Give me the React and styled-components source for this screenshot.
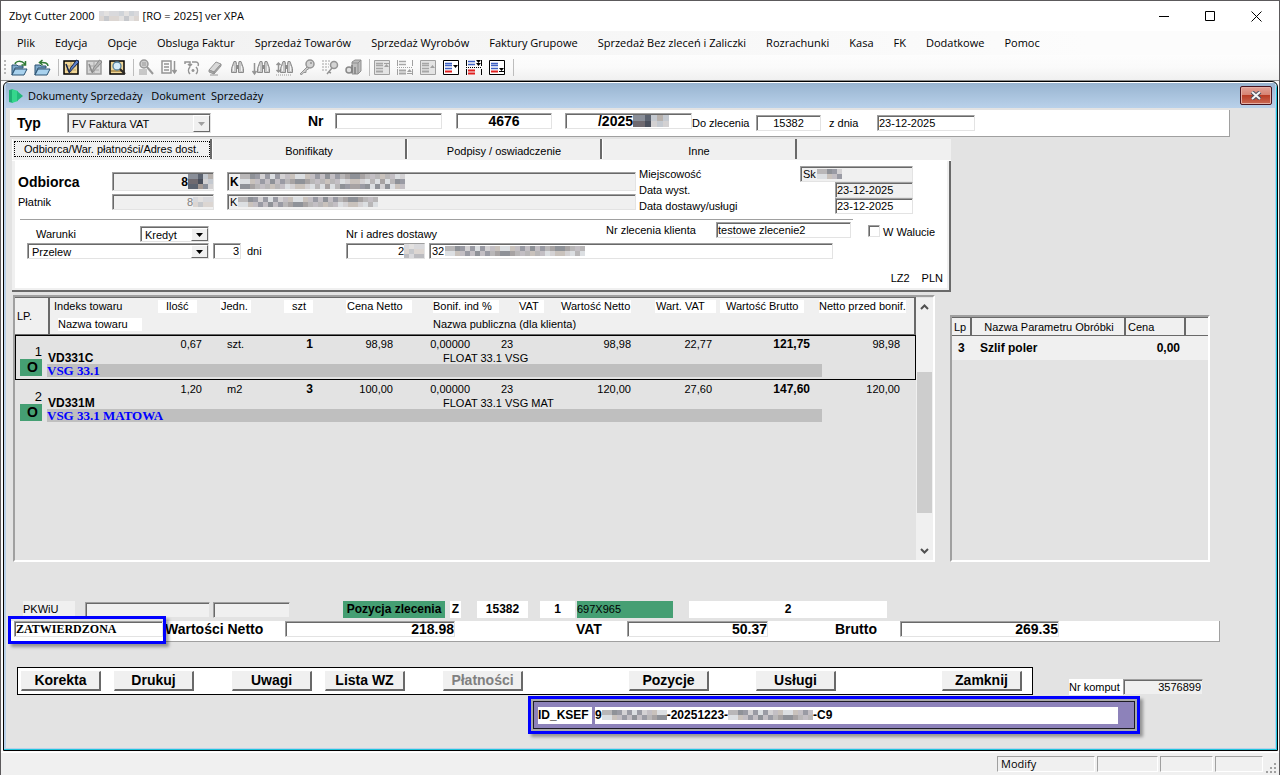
import React from 'react'
import styled, { createGlobalStyle, css } from 'styled-components'

const FACE = '#e3e3e3'
const LIGHT = '#f0f0f0'
const WHITE = '#ffffff'
const SHADOW = '#a0a0a0'
const DARK = '#696969'
const GREEN = '#459f73'
const BLUE = '#0000ff'
const PURPLE = '#8d82ba'

const UI_FONT = '"Open Sans", "Noto Sans", sans-serif'
const FORM_FONT = '"Liberation Sans", Arial, sans-serif'
const SERIF_FONT = '"Liberation Serif", "Times New Roman", serif'

const GlobalStyle = createGlobalStyle`
  * {
    box-sizing: border-box;
  }
  body {
    margin: 0;
    background: #5c5a5c;
    color: #000;
    font: 11px/14px ${FORM_FONT};
  }
  input, select, button {
    margin: 0;
    padding: 0;
    border: 0;
    border-radius: 0;
    background: transparent;
    color: inherit;
    font: inherit;
  }
`

const sunken = css`
  border: 1px solid;
  border-color: ${SHADOW} ${FACE} ${FACE} ${SHADOW};
  box-shadow: inset 1px 1px 0 ${DARK};
`

/* ---------- frame ---------- */

const Frame = styled.div`
  display: flex;
  flex-direction: column;
  min-height: 100vh;
  padding: 1px;
  background: #5c5a5c;
`

const TitleBar = styled.header`
  display: flex;
  align-items: center;
  height: 30px;
  padding-left: 8px;
  background: ${WHITE};
  font: 11px/16px ${UI_FONT};
`

const TitleText = styled.h1`
  display: flex;
  flex: 1;
  align-items: center;
  gap: 4px;
  margin: 0;
  font: inherit;
`

const CaptionButton = styled.button`
  display: flex;
  align-items: center;
  justify-content: center;
  width: 46px;
  height: 30px;
`

const MenuBar = styled.nav`
  display: flex;
  gap: 20px;
  align-items: center;
  height: 24px;
  padding-left: 16px;
  background: linear-gradient(90deg, #f0f0f0, #fcfcfc 85%);
  font: 11px/16px ${UI_FONT};
`

const MenuLink = styled.a`
  color: #000;
  text-decoration: none;
  white-space: nowrap;
`

const ToolBar = styled.div`
  display: flex;
  align-items: center;
  height: 26px;
  padding: 0 0 0 3px;
  border-bottom: 1px solid #8c8c8c;
  background: linear-gradient(#fdfdfd, #fafafa 50%, #f0f0f0);
`

const Grip = styled.div`
  width: 2px;
  height: 16px;
  margin-right: 5px;
  background: repeating-linear-gradient(#b8b8b8 0 2px, transparent 2px 4px);
`

const ToolButton = styled.button`
  display: flex;
  width: 16px;
  height: 17px;
  margin-right: 7px;
`

const Separator = styled.div`
  width: 1px;
  height: 17px;
  margin: 0 4px 0 1px;
  background: #bdbdbd;
`

const Client = styled.main`
  display: flex;
  flex: 1;
  padding: 0 1px 1px 2px;
  background: #fafafa;
`

const ChildWindow = styled.section`
  display: flex;
  flex: 1;
  flex-direction: column;
  border: 1px solid #000;
  border-radius: 6px 6px 0 0;
  box-shadow: inset 0 1px 0 ${WHITE}, inset -1px -1px 0 #1fc4dc;
  background: #b9d1ea;
  padding: 1px 2px 2px 2px;
  overflow: hidden;
`

const ChildTitle = styled.header`
  display: flex;
  align-items: center;
  height: 25px;
  padding: 0 3px 0 2px;
  background: linear-gradient(#98b4d0, #b9d1ea);
  font: 11px/16px ${UI_FONT};
`

const ChildCaption = styled.h2`
  flex: 1;
  margin: 0 0 0 4px;
  font: inherit;
  white-space: pre;
`

const CloseButton = styled.button`
  display: flex;
  align-items: center;
  justify-content: center;
  width: 32px;
  height: 19px;
  border: 1px solid #4a1520;
  border-radius: 2px;
  background: linear-gradient(#e2a297, #d78474 45%, #b93d26 50%, #c96a55);
  box-shadow: inset 0 0 0 1px #e5b0a6;
`

const Content = styled.div`
  display: flex;
  flex: 1;
  flex-direction: column;
  padding-bottom: 14px;
  background: ${FACE};
`

/* ---------- form parts ---------- */

const Label = styled.label`
  flex: none;
  width: ${({ $w }) => ($w ? `${$w}px` : 'auto')};
  margin-left: ${({ $ml = 0 }) => $ml}px;
  line-height: 16px;
  white-space: nowrap;
  align-self: ${({ $align }) => $align || 'auto'};
`

const BigLabel = styled(Label)`
  font-size: 14px;
  font-weight: bold;
`

const Field = styled.input`
  ${sunken}
  flex: none;
  width: ${({ $w }) => $w}px;
  height: 16px;
  margin-left: ${({ $ml = 0 }) => $ml}px;
  padding: 0 1px;
  background: ${({ $grey }) => ($grey ? LIGHT : WHITE)};
  text-align: ${({ $text }) => $text || 'left'};
  align-self: ${({ $align }) => $align || 'auto'};
`

const BigField = styled(Field)`
  padding: 0;
  font-size: 14px;
  font-weight: bold;
`

const StatusField = styled(Field)`
  font: bold 12px/14px ${SERIF_FONT};
`

const MaskedBox = styled.div`
  ${sunken}
  display: flex;
  flex: none;
  align-items: center;
  justify-content: ${({ $end }) => ($end ? 'flex-end' : 'flex-start')};
  width: ${({ $w }) => $w}px;
  height: ${({ $tall }) => ($tall ? 19 : 16)}px;
  margin-left: ${({ $ml = 0 }) => $ml}px;
  padding: 0 0 0 2px;
  background: ${({ $grey }) => ($grey ? LIGHT : WHITE)};
  overflow: hidden;
`

const BareInput = styled.input`
  width: ${({ $w }) => $w}px;
  height: 14px;
  text-align: ${({ $text }) => $text || 'left'};
  font-size: ${({ $size = 11 }) => $size}px;
  font-weight: ${({ $bold }) => ($bold ? 'bold' : 'normal')};
  color: ${({ $dim }) => ($dim ? '#808080' : '#000')};
`

const SelectBox = styled.div`
  ${sunken}
  display: flex;
  flex: none;
  width: ${({ $w }) => $w}px;
  height: ${({ $tall }) => ($tall ? 20 : 16)}px;
  margin-left: ${({ $ml = 0 }) => $ml}px;
  padding: 1px 0 0 1px;
  background: ${({ $grey }) => ($grey ? LIGHT : WHITE)};
  align-self: ${({ $align }) => $align || 'auto'};
`

const Select = styled.select`
  flex: 1;
  min-width: 0;
  padding-left: 3px;
  appearance: none;
  line-height: 12px;
  opacity: 1;
  color: #000;
`

const Arrow = styled.span`
  display: flex;
  align-items: center;
  justify-content: center;
  width: 17px;
  border: 1px solid;
  border-color: ${WHITE} ${DARK} ${DARK} ${WHITE};
  background: ${LIGHT};
  pointer-events: none;
`

const CheckBox = styled.input`
  ${sunken}
  width: 12px;
  height: 12px;
  margin: 3px 0 0 17px;
  appearance: none;
  background: ${WHITE};
`

const MosaicSvg = styled.svg`
  display: block;
  flex: none;
`

/* ---------- header and tabs ---------- */

const HeaderPanel = styled.div`
  display: flex;
  align-items: center;
  height: 27px;
  margin: 2px 45px 0 4px;
  padding: 0 0 0 7px;
  border: solid ${SHADOW};
  border-width: 0 1px 1px 0;
  background: ${WHITE};
`

const NumberGroup = styled.div`
  display: flex;
  align-items: center;
  align-self: flex-start;
  padding-top: 3px;
  margin-left: 97px;
`

const TabSet = styled.div`
  margin: 2px 324px 0 6px;
`

const TabList = styled.div`
  display: flex;
  height: 22px;
  background: ${LIGHT};
  border-bottom: 1px solid ${WHITE};
`

const Tab = styled.button`
  width: 195px;
  height: 20px;
  border-right: 2px solid ${DARK};
  border-left: 1px solid ${WHITE};
  padding-top: 3px;
  ${({ $active }) =>
    $active &&
    css`
      width: 200px;
      padding-top: 0;
      outline: 1px dotted #000;
      outline-offset: -3px;
    `}
`

const TabPanel = styled.div`
  padding: 5px 5px 3px 3px;
  border: solid ${DARK};
  border-width: 0 2px 2px 0;
  box-shadow: inset 3px 0 0 ${LIGHT}, inset -2px -2px 0 ${LIGHT};
  background: ${WHITE};
`

const Party = styled.div`
  display: flex;
  justify-content: space-between;
  height: 53px;
  margin-right: 31px;
  padding-left: 3px;
`

const PartyRows = styled.div`
  display: flex;
  flex-direction: column;
  gap: 3px;
  padding-top: 6px;
`

const Line = styled.div`
  display: flex;
  align-items: center;
`

const DateRow = styled.div`
  display: flex;
  justify-content: space-between;
  width: 274px;
  height: 16px;
`

const Rule = styled.hr`
  height: 1px;
  margin: 0 91px 2px 5px;
  border: 0;
  background: ${SHADOW};
`

const TermsRow = styled.div`
  display: flex;
  height: 20px;
  padding-left: 21px;
  margin-bottom: 1px;
`

const TermsLine = styled(Line)`
  padding-left: 12px;
`

const TabFooter = styled.div`
  display: flex;
  justify-content: flex-end;
  gap: 12px;
  margin: 12px 1px 2px;
  line-height: 14px;
`

/* ---------- tables ---------- */

const Tables = styled.div`
  display: flex;
  flex: 1;
  align-items: stretch;
  gap: 15px;
  min-height: 267px;
  margin: 3px 65px 0 7px;
`

const Sheet = styled.div`
  display: flex;
  flex: 1;
  min-width: 0;
  border: 2px solid;
  border-color: ${SHADOW} ${WHITE} ${WHITE} ${SHADOW};
`

const ItemsTable = styled.table`
  display: block;
  flex: 1;
  min-width: 0;
  border-collapse: collapse;
`

const ItemsHead = styled.thead`
  display: block;
`

const ItemsBody = styled.tbody`
  display: block;
`

const HeadRow = styled.tr`
  display: grid;
  grid-template-columns: 35px 108px 62px 64px 62px 87px 86px 42px 94px 65px 99px 1fr;
  grid-template-rows: 18px 18px;
  border: solid ${DARK};
  border-width: 1px 2px 1px 0;
  background: ${LIGHT};
`

const HeadCell = styled.th`
  padding: 2px 0 0;
  font-weight: normal;
  text-align: left;
  white-space: nowrap;
  grid-row: ${({ $row = 1 }) => $row};
  grid-column: ${({ $col }) => $col};
`

const LpHead = styled(HeadCell)`
  grid-row: 1 / 3;
  padding: 11px 0 0 2px;
  border-right: 2px solid ${DARK};
`

const HeadLabel = styled.span`
  display: block;
  width: ${({ $w }) => ($w ? `${$w}px` : 'auto')};
  height: 13px;
  margin-left: ${({ $ml = 0 }) => $ml}px;
  padding-left: ${({ $pad = 0 }) => $pad}px;
  line-height: 13px;
  background: ${({ $plain }) => ($plain ? 'transparent' : WHITE)};
`

const ItemRow = styled.tr`
  display: grid;
  grid-template-columns: 31px 111px 44px 68px 43px 80px 77px 50px 111px 81px 98px 90px 1fr;
  grid-template-rows: 15px 13px 13px 2px;
  border: 1px solid ${({ $selected }) => ($selected ? '#000' : 'transparent')};
`

const Cell = styled.td`
  padding: 0 0 0 ${({ $pad = 0 }) => $pad}px;
  text-align: ${({ $left }) => ($left ? 'left' : 'right')};
  line-height: 16px;
  white-space: nowrap;
  font-size: ${({ $bold }) => ($bold ? 12 : 11)}px;
  font-weight: ${({ $bold }) => ($bold ? 'bold' : 'normal')};
`

const LpCell = styled.td`
  display: flex;
  flex-direction: column;
  align-items: flex-end;
  justify-content: flex-end;
  grid-row: 1 / 4;
  padding: 0 5px 1px 0;
  font-size: 13px;
`

const Badge = styled.b`
  width: 22px;
  height: 17px;
  padding-right: 4px;
  background: ${GREEN};
  font-size: 14px;
  line-height: 17px;
  text-align: right;
`

const IndexCell = styled.td`
  grid-row: 2;
  grid-column: 2 / 7;
  padding: 0 0 0 1px;
  font-size: 12px;
  font-weight: bold;
`

const PublicCell = styled.td`
  grid-row: 2;
  grid-column: 7 / 13;
  padding: 0 0 0 50px;
`

const NameCell = styled.td`
  grid-row: 3;
  grid-column: 2 / 12;
  margin-right: -12px;
  padding: 0;
  background: #bfbfbf;
  color: ${BLUE};
  font: bold 13px/13px ${SERIF_FONT};
`

const ScrollBar = styled.div`
  display: flex;
  flex-direction: column;
  align-items: center;
  width: 17px;
  padding-top: 1px;
  background: ${LIGHT};
  background-clip: content-box;
`

const ScrollButton = styled.button`
  display: flex;
  align-items: center;
  justify-content: center;
  width: 16px;
  height: 18px;
`

const ScrollTrack = styled.div`
  flex: 1;
  width: 100%;
  padding: 56px 1px 29px 1px;
`

const ScrollThumb = styled.div`
  height: 100%;
  background: #cdcdcd;
`

const ParamSheet = styled(Sheet)`
  flex: 0 0 260px;
  margin-top: 20px;
`

const ParamTable = styled.table`
  width: 100%;
  height: 42px;
  border-collapse: collapse;
  table-layout: fixed;

  th {
    height: 18px;
    padding: 1px 0 0 2px;
    border: solid ${DARK};
    border-width: 1px 2px 1px 0;
    background: ${LIGHT};
    font-weight: normal;
    text-align: left;
  }
  th:last-child {
    border-right: 0;
  }
  th:nth-child(2) {
    text-align: center;
  }
  td {
    height: 24px;
    padding: 0 5px 0 9px;
    background: ${LIGHT};
    font-size: 12px;
    font-weight: bold;
  }
  td:first-child {
    padding: 0 0 0 6px;
  }
  td:nth-child(3) {
    text-align: right;
  }
`

/* ---------- bottom ---------- */

const OrderRow = styled.div`
  display: flex;
  align-items: center;
  height: 17px;
  margin: 39px 0 0 17px;
`

const Chip = styled.output`
  width: ${({ $w }) => $w}px;
  height: 17px;
  margin-left: ${({ $ml = 0 }) => $ml}px;
  background: ${({ $bg }) => $bg || WHITE};
  font-size: ${({ $regular }) => ($regular ? 11 : 12)}px;
  font-weight: ${({ $regular }) => ($regular ? 'normal' : 'bold')};
  line-height: 17px;
  text-align: ${({ $text }) => $text || 'center'};
`

const Totals = styled.div`
  display: flex;
  height: 21px;
  margin: 3px 55px 0 4px;
  padding-left: 4px;
  border: solid ${SHADOW};
  border-width: 0 1px 1px 0;
  background: ${WHITE};
`

const Marked = styled.div`
  position: relative;
  display: flex;
  align-self: flex-start;

  &::after {
    content: '';
    position: absolute;
    inset: -5px -3px -7px -6px;
    border: 3px solid ${BLUE};
    box-shadow: 3px 3px 3px rgba(0, 0, 0, 0.35);
    pointer-events: none;
  }
`

const ActionRow = styled.div`
  display: flex;
  align-items: flex-end;
  margin: 25px 0 0 11px;
`

const Actions = styled.div`
  display: flex;
  width: 1016px;
  height: 28px;
  padding: 3px 0 0 3px;
  border: 1px solid #000;
  background: ${WHITE};
`

const ActionButton = styled.button`
  flex: none;
  width: 80px;
  height: 20px;
  margin-left: ${({ $ml = 0 }) => $ml}px;
  border: solid;
  border-width: 1px 2px 2px 1px;
  border-color: ${LIGHT} ${DARK} ${DARK} ${LIGHT};
  background: ${LIGHT};
  font-size: 14px;
  font-weight: bold;
  line-height: 17px;

  &:disabled {
    color: #808080;
  }
`

const NumberLabel = styled(Label)`
  margin-left: 36px;
  height: 16px;
  background: ${WHITE};
`

const Ksef = styled.div`
  display: flex;
  align-items: center;
  width: 612px;
  height: 38px;
  margin: 1px 0 0 522px;
  padding: 0 0 0 3px;
  border: 3px solid ${BLUE};
  background: ${PURPLE};
  box-shadow: 3px 3px 3px rgba(0, 0, 0, 0.35), inset 0 0 0 2px #a8a8a8,
    inset 0 0 0 3px #1c1a24;
  font-size: 12px;
  font-weight: bold;
`

const KsefLabel = styled.label`
  width: 54px;
  height: 17px;
  margin-left: 4px;
  background: ${WHITE};
  line-height: 17px;
`

const KsefValue = styled.output`
  display: flex;
  align-items: center;
  width: 523px;
  height: 17px;
  margin-left: 3px;
  background: ${WHITE};
`

const StatusBar = styled.footer`
  display: flex;
  align-items: flex-start;
  justify-content: flex-end;
  gap: 2px;
  height: 23px;
  padding: 3px 2px 0 0;
  border-top: 1px solid ${WHITE};
  background: ${LIGHT};
  font: 11px/16px ${UI_FONT};
`

const StatusCell = styled.div`
  width: ${({ $w }) => $w}px;
  height: 16px;
  padding-left: 3px;
  border: 1px solid;
  border-color: ${SHADOW} ${WHITE} ${WHITE} ${SHADOW};
  line-height: 14px;
`

/* ---------- drawings ---------- */

const PALETTES = {
  grey: ['#b9b7b8', '#d4d2d4', '#8f9298', '#c3bfc4', '#a7a3a3', '#dcdfe2', '#9a9ba4', '#c9c2bc'],
  dark: ['#8a8f99', '#b7b1ad', '#5c6370', '#d3d1d2', '#a59a94', '#6f6a70', '#c4c9d0', '#494f5c'],
  pale: ['#d9d9dc', '#c6c8cc', '#e3e1e0', '#cfd3d8', '#bcbcc0', '#dcd6d2']
}

const Mosaic = ({ cols, rows = 2, size = 5, tone = 'grey' }) => {
  const palette = PALETTES[tone]
  const tiles = []
  for (let y = 0; y < rows; y++) {
    for (let x = 0; x < cols; x++) {
      const fill = palette[(x * 7 + y * 5 + ((x * x) % 11)) % palette.length]
      tiles.push(
        <rect key={`${x}-${y}`} x={x * size} y={y * size} width={size} height={size} fill={fill} />
      )
    }
  }
  return (
    <MosaicSvg width={cols * size} height={rows * size} aria-hidden="true" shapeRendering="crispEdges">
      {tiles}
    </MosaicSvg>
  )
}

const Triangle = ({ dim }) => (
  <svg width="7" height="4" viewBox="0 0 7 4" aria-hidden="true">
    <path d="M0 0h7L3.5 4z" fill={dim ? '#a0a0a0' : '#000'} />
  </svg>
)

const Chevron = ({ down }) => (
  <svg width="9" height="6" viewBox="0 0 9 6" aria-hidden="true">
    <path
      d={down ? 'M1 1l3.5 3.5L8 1' : 'M1 5l3.5-3.5L8 5'}
      fill="none"
      stroke="#505050"
      strokeWidth="2"
    />
  </svg>
)

const Folder = ({ back }) => (
  <>
    <path d="M1 6h5l1 1h5v2H4l-3 7z" fill="#7fa9cb" stroke="#2b5373" />
    <path d="M4 10h12l-3 6H1z" fill="#a9d2ee" stroke="#2b5373" />
    {back ? (
      <path d="M14 7C14 4 11 3 6 3.500M8.500 1L5.500 3.500l3 2.500" fill="none" stroke="#2f7a34" strokeWidth="1.500" />
    ) : (
      <path d="M4 5C5 2 10 1 14 5M14.500 2v4h-4" fill="none" stroke="#2f7a34" strokeWidth="1.500" />
    )}
  </>
)

const Record = ({ dim }) => (
  <>
    <path d="M1 2h14v13H1z" fill={dim ? '#d6d6d6' : '#f0d696'} stroke={dim ? '#9c9c9c' : '#000'} strokeWidth="1.500" />
    <path d="M3 7h10M3 11h10M8 3v11" stroke={dim ? '#a8a8a8' : '#c0a468'} />
    <path d="M13.500 1L7.500 9l-1.500 5 3-3.500L16 3z" fill={dim ? '#b4b4b4' : '#5b7fc9'} stroke={dim ? '#8a8a8a' : '#14244f'} />
    <path d="M3 5l3 8" stroke={dim ? '#8a8a8a' : '#14244f'} strokeWidth="1.500" />
  </>
)

/* two barrels joined by a short bridge */
const Binoculars = ({ shift = 0 }) => (
  <g transform={`translate(${shift} 0)`} stroke="#8b8b8b" fill="#c8c8c8">
    <path d="M4 2.500h2l.5 3V13.500h-5V9.500zM9 2.500h2l2.500 7v4h-5v-8z" />
    <path d="M6.500 6.500h2v3h-2z" fill="#8b8b8b" />
    <path d="M3.500 7v5M11.500 7v5" stroke="#f2f2f2" />
  </g>
)

const Lines = ({ hot, spot }) => {
  const ink = hot ? '#000' : '#a0a0a0'
  const row = hot ? '#3f62c4' : '#a6a6a6'
  const mark = hot ? '#e02020' : '#a6a6a6'
  const split = spot === 'split'
  return (
    <>
      <path
        d={split ? 'M.5 1v6M15.500 1v6M.5 10v6M15.500 10v6' : 'M.5 1.500h15v14H.5z'}
        fill={hot ? '#fff' : '#e4e4e4'}
        stroke={ink}
      />
      <path d={split ? 'M2 2.500h7M2 5.500h7' : 'M2 4.500h7M2 6.500h7M2 9.500h7'} stroke={row} strokeWidth="1.500" />
      <path d={split ? 'M2 11.500h7M2 14.500h7' : 'M2 12.500h7'} stroke={mark} strokeWidth="2" />
      {spot === 'up' && <path d="M10 4h5v1h-5zM12.500 5l2.500 3h-5z" fill={ink} />}
      {spot === 'mid' && <path d="M12.500 6l2.500 3h-5z" fill={ink} />}
      {spot === 'down' && <path d="M10 6h5l-2.500 3z" fill={ink} />}
      {spot === 'last' && <path d="M10 9h5l-2.500 3zM10 12h5v1h-5z" fill={ink} />}
      {split && (
        <>
          <path d="M0 8.500h16" stroke={ink} strokeDasharray="1 1" />
          <path d={hot ? 'M10 1h5l-2.500 3zM10 4h5l-2.500 3z' : 'M12.500 10l2.500 3h-5zM10 14h5v1h-5z'} fill={ink} />
        </>
      )}
    </>
  )
}

const GREY_LINE = { fill: 'none', stroke: '#949494', strokeWidth: 1.5 }

const TOOL_GROUPS = [
  [
    ['Otwórz', <Folder />],
    ['Powrót', <Folder back />]
  ],
  [
    ['Modyfikuj', <Record />],
    ['Dopisz', <Record dim />],
    [
      'Pokaż',
      <>
        <path d="M1 2h14v13H1z" fill="#f0d696" stroke="#000" strokeWidth="1.500" />
        <path d="M2 12h12" stroke="#b89a5a" strokeWidth="2" />
        <circle cx="8" cy="7" r="4" fill="#d5ecfa" stroke="#56809c" strokeWidth="1.300" />
        <path d="M11 10l5 5" stroke="#2d2a26" strokeWidth="2.200" />
      </>
    ]
  ],
  [
    [
      'Zakres',
      <>
        <circle cx="6" cy="5" r="4" fill="#cfcfcf" stroke="#999" strokeWidth="1.500" />
        <path d="M4 4h4M4 6h4M1 11h8M1 13h8M1 15h8" stroke="#999" />
        <path d="M9 8l6 7" stroke="#999" strokeWidth="2" />
      </>
    ],
    ['Sortuj', <path d="M1 2h9v12H1zM3 5h5M3 8h5M3 11h5M13.500 2v12M11.500 11l2 3 2-3" {...GREY_LINE} />],
    ['Wyrażenie', <path d="M1 5V3h5v3M4 5l2 2 2-2M6 8c-2 2-2 5 0 7M9 10v3M7.500 11.500h3M12 8c2 2 2 5 0 7M8 3h4c2 0 3 2 2 4" {...GREY_LINE} />],
    [
      'Wyczyść',
      <>
        <path d="M2 11l7-8 5 2-7 8z" fill="#d8d8d8" stroke="#969696" />
        <path d="M2 11l5 2v2l-5-2zM7 13l7-8v2l-7 8zM3 16h8" fill="#a8a8a8" stroke="#969696" />
      </>
    ],
    ['Szukaj', <Binoculars />],
    [
      'Szukaj dalej',
      <>
        <path d="M1.500 4v11M-.5 12l2 3 2-3" {...GREY_LINE} />
        <Binoculars shift={3} />
      </>
    ],
    [
      'Szukaj w zakresie',
      <>
        <path d="M2.500 4v8M.5 6l2-2 2 2M.5 11l2 2 2-2" {...GREY_LINE} />
        <Binoculars shift={3} />
        <path d="M0 16h16" stroke="#999" strokeDasharray="1 1" />
      </>
    ],
    [
      'Klucz',
      <>
        <path d="M8 8l-7 7 2 .5 1.500-2H7l0-2 3-2" fill="#d0d0d0" stroke="#949494" />
        <circle cx="11" cy="5" r="4" fill="#d4d4d4" stroke="#949494" strokeWidth="1.500" />
        <circle cx="12" cy="4" r="1" fill="#949494" />
      </>
    ],
    [
      'Lista kluczy',
      <>
        <path d="M0 2h9M0 5h7M0 8h7M0 11h5" stroke="#a2a2a2" strokeDasharray="2 1" />
        <path d="M10 9l-5 6M7 13l2 1" {...GREY_LINE} />
        <circle cx="12" cy="6" r="3.500" fill="#d4d4d4" stroke="#949494" strokeWidth="1.500" />
      </>
    ],
    [
      'Baza',
      <>
        <path d="M7 3l3-2h6v11l-3 3H7z" fill="#bdbdbd" stroke="#8f8f8f" />
        <path d="M13 4v11M7 4h6l3-3" stroke="#8f8f8f" fill="none" />
        <circle cx="4" cy="11" r="3" fill="#e0e0e0" stroke="#8a8a8a" strokeWidth="1.500" />
        <path d="M7 6v8M10 8v7" stroke="#808080" strokeWidth="1.500" />
      </>
    ]
  ],
  [
    ['Pierwszy', <Lines spot="up" />],
    ['Strona w górę', <Lines spot="split" />],
    ['Poprzedni', <Lines spot="mid" />],
    ['Następny', <Lines hot spot="down" />],
    ['Strona w dół', <Lines hot spot="split" />],
    ['Ostatni', <Lines hot spot="last" />]
  ]
]

/* ---------- data ---------- */

const MENU = [
  'Plik',
  'Edycja',
  'Opcje',
  'Obsluga Faktur',
  'Sprzedaż Towarów',
  'Sprzedaż Wyrobów',
  'Faktury Grupowe',
  'Sprzedaż Bez zleceń i Zaliczki',
  'Rozrachunki',
  'Kasa',
  'FK',
  'Dodatkowe',
  'Pomoc'
]

const TABS = ['Odbiorca/War. płatności/Adres dost.', 'Bonifikaty', 'Podpisy / oswiadczenie', 'Inne']

const HEADINGS = [
  { text: 'Indeks towaru', ml: 4, plain: true },
  { text: 'Ilość', w: 39, pad: 8 },
  { text: 'Jedn.', w: 31, pad: 1 },
  { text: 'szt', w: 29, pad: 8 },
  { text: 'Cena Netto', w: 66, pad: 1 },
  { text: 'Bonif. ind %', w: 66 },
  { text: 'VAT', w: 25 },
  { text: 'Wartość Netto', w: 70 },
  { text: 'Wart. VAT', w: 61, pad: 1 },
  { text: 'Wartość Brutto', w: 84, pad: 6 },
  { text: 'Netto przed bonif.', w: 87 }
]

const ITEMS = [
  {
    lp: 1,
    index: 'VD331C',
    name: 'VSG 33.1',
    publicName: 'FLOAT 33.1 VSG',
    qty: '0,67',
    unit: 'szt.',
    pcs: '1',
    price: '98,98',
    net: '98,98',
    tax: '22,77',
    gross: '121,75',
    before: '98,98'
  },
  {
    lp: 2,
    index: 'VD331M',
    name: 'VSG 33.1 MATOWA',
    publicName: 'FLOAT 33.1 VSG MAT',
    qty: '1,20',
    unit: 'm2',
    pcs: '3',
    price: '100,00',
    net: '120,00',
    tax: '27,60',
    gross: '147,60',
    before: '120,00'
  }
]

const ACTIONS = [
  { text: 'Korekta' },
  { text: 'Drukuj', ml: 13 },
  { text: 'Uwagi', ml: 38 },
  { text: 'Lista WZ', ml: 13 },
  { text: 'Płatności', ml: 38, disabled: true },
  { text: 'Pozycje', ml: 106 },
  { text: 'Usługi', ml: 47 },
  { text: 'Zamknij', ml: 106 }
]

/* ---------- sections ---------- */

const DropDown = ({ id, value, label, disabled, ...box }) => (
  <SelectBox {...box}>
    <Select id={id} aria-label={label} disabled={disabled} defaultValue={value}>
      <option>{value}</option>
    </Select>
    <Arrow>
      <Triangle dim={disabled} />
    </Arrow>
  </SelectBox>
)

const Caption = () => (
  <TitleBar>
    <TitleText>
      <span>Zbyt Cutter 2000</span>
      <Mosaic cols={8} rows={2} tone="pale" />
      <span>[RO = 2025] ver XPA</span>
    </TitleText>
    <CaptionButton aria-label="Minimalizuj">
      <svg width="10" height="10">
        <path d="M0 5.500h10" stroke="#000" />
      </svg>
    </CaptionButton>
    <CaptionButton aria-label="Maksymalizuj">
      <svg width="10" height="10">
        <path d="M.5.5h9v9h-9z" fill="none" stroke="#000" />
      </svg>
    </CaptionButton>
    <CaptionButton aria-label="Zamknij program">
      <svg width="11" height="11">
        <path d="M.5.5l10 10M10.500.5l-10 10" stroke="#000" />
      </svg>
    </CaptionButton>
  </TitleBar>
)

const Tools = () => (
  <ToolBar role="toolbar">
    <Grip />
    {TOOL_GROUPS.map((group, i) => (
      <React.Fragment key={i}>
        {group.map(([title, drawing]) => (
          <ToolButton key={title} aria-label={title}>
            <svg width="16" height="17" viewBox="0 0 16 17" overflow="visible">
              {drawing}
            </svg>
          </ToolButton>
        ))}
        <Separator />
      </React.Fragment>
    ))}
  </ToolBar>
)

const DocumentHeader = () => (
  <HeaderPanel>
    <BigLabel htmlFor="typ" $w={50}>
      Typ
    </BigLabel>
    <DropDown id="typ" value="FV Faktura VAT" $w={144} $tall $grey disabled />
    <NumberGroup>
      <BigLabel htmlFor="nr" $w={27}>
        Nr
      </BigLabel>
      <Field id="nr" $w={107} />
      <BigField aria-label="Numer" $w={96} $ml={14} $text="center" defaultValue="4676" />
      <MaskedBox $w={127} $ml={13}>
        <BareInput aria-label="Rok" $w={65} $text="right" $size={14} $bold defaultValue="/2025" />
        <Mosaic cols={6} rows={2} tone="dark" size={6} />
      </MaskedBox>
    </NumberGroup>
    <Label htmlFor="zlec" $w={64}>
      Do zlecenia
    </Label>
    <Field id="zlec" $w={65} $text="center" defaultValue="15382" />
    <Label htmlFor="zdnia" $w={48} $ml={8}>
      z dnia
    </Label>
    <Field id="zdnia" $w={98} defaultValue="23-12-2025" />
  </HeaderPanel>
)

const Recipient = () => (
  <Party>
    <PartyRows>
      <Line>
        <BigLabel htmlFor="odb" $w={94}>
          Odbiorca
        </BigLabel>
        <MaskedBox $w={102} $tall $grey $end>
          <BareInput id="odb" $w={60} $text="right" $size={12} $bold defaultValue="8" />
          <Mosaic cols={5} rows={3} tone="dark" />
        </MaskedBox>
        <MaskedBox $w={409} $ml={13} $tall $grey>
          <BareInput aria-label="Nazwa odbiorcy" $w={10} $size={12} $bold defaultValue="K" />
          <Mosaic cols={33} rows={3} />
        </MaskedBox>
      </Line>
      <Line>
        <Label htmlFor="plat" $w={94}>
          Płatnik
        </Label>
        <MaskedBox $w={102} $grey $end>
          <BareInput id="plat" $w={60} $text="right" $dim defaultValue="8" />
          <Mosaic cols={4} tone="pale" />
        </MaskedBox>
        <MaskedBox $w={409} $ml={13} $grey>
          <BareInput aria-label="Nazwa płatnika" $w={8} defaultValue="K" />
          <Mosaic cols={28} />
        </MaskedBox>
      </Line>
    </PartyRows>
    <div>
      <DateRow>
        <Label htmlFor="miejsc">Miejscowość</Label>
        <MaskedBox $w={113} $grey>
          <BareInput id="miejsc" $w={14} defaultValue="Sk" />
          <Mosaic cols={5} />
        </MaskedBox>
      </DateRow>
      <DateRow>
        <Label htmlFor="wyst">Data wyst.</Label>
        <Field id="wyst" $w={78} $grey defaultValue="23-12-2025" />
      </DateRow>
      <DateRow>
        <Label htmlFor="dost">Data dostawy/usługi</Label>
        <Field id="dost" $w={78} defaultValue="23-12-2025" />
      </DateRow>
    </div>
  </Party>
)

const Terms = () => (
  <>
    <TermsRow>
      <Label htmlFor="war" $w={104} $align="flex-end">
        Warunki
      </Label>
      <DropDown id="war" value="Kredyt" $w={69} $align="flex-end" />
      <Label htmlFor="adres" $w={260} $ml={137} $align="flex-end">
        Nr i adres dostawy
      </Label>
      <Label htmlFor="zlk" $w={110}>
        Nr zlecenia klienta
      </Label>
      <Field id="zlk" $w={135} defaultValue="testowe zlecenie2" />
      <CheckBox type="checkbox" id="wal" />
      <Label htmlFor="wal" $ml={3} $align="center">
        W Walucie
      </Label>
    </TermsRow>
    <TermsLine>
      <DropDown label="Forma płatności" value="Przelew" $w={182} />
      <Field id="dni" $w={28} $ml={4} $text="right" defaultValue="3" />
      <Label htmlFor="dni" $w={99} $ml={6}>
        dni
      </Label>
      <MaskedBox $w={79} $end>
        <BareInput id="adres" $w={50} $text="right" defaultValue="2" />
        <Mosaic cols={4} rows={3} tone="pale" />
      </MaskedBox>
      <MaskedBox $w={404} $ml={4}>
        <BareInput aria-label="Adres dostawy" $w={13} defaultValue="32" />
        <Mosaic cols={28} />
      </MaskedBox>
    </TermsLine>
    <TabFooter>
      <span>LZ2</span>
      <span>PLN</span>
    </TabFooter>
  </>
)

const Items = () => (
  <Sheet>
    <ItemsTable>
      <ItemsHead>
        <HeadRow>
          <LpHead>LP.</LpHead>
          {HEADINGS.map(({ text, w, ml, pad, plain }, i) => (
            <HeadCell key={text} $col={i + 2}>
              <HeadLabel $w={w} $ml={ml} $pad={pad} $plain={plain}>
                {text}
              </HeadLabel>
            </HeadCell>
          ))}
          <HeadCell $row={2} $col="2">
            <HeadLabel $w={84} $ml={8}>
              Nazwa towaru
            </HeadLabel>
          </HeadCell>
          <HeadCell $row={2} $col="7 / 10">
            <HeadLabel $plain>Nazwa publiczna (dla klienta)</HeadLabel>
          </HeadCell>
        </HeadRow>
      </ItemsHead>
      <ItemsBody>
        {ITEMS.map(item => (
          <ItemRow key={item.lp} $selected={item.lp === 1}>
            <LpCell>
              {item.lp}
              <Badge>O</Badge>
            </LpCell>
            <Cell />
            <Cell>{item.qty}</Cell>
            <Cell $left $pad={25}>
              {item.unit}
            </Cell>
            <Cell $bold>{item.pcs}</Cell>
            <Cell>{item.price}</Cell>
            <Cell>0,00000</Cell>
            <Cell $left $pad={31}>
              23
            </Cell>
            <Cell>{item.net}</Cell>
            <Cell>{item.tax}</Cell>
            <Cell $bold>{item.gross}</Cell>
            <Cell>{item.before}</Cell>
            <IndexCell>{item.index}</IndexCell>
            <PublicCell>{item.publicName}</PublicCell>
            <NameCell>{item.name}</NameCell>
          </ItemRow>
        ))}
      </ItemsBody>
    </ItemsTable>
    <ScrollBar>
      <ScrollButton aria-label="W górę">
        <Chevron />
      </ScrollButton>
      <ScrollTrack>
        <ScrollThumb />
      </ScrollTrack>
      <ScrollButton aria-label="W dół">
        <Chevron down />
      </ScrollButton>
    </ScrollBar>
  </Sheet>
)

const Params = () => (
  <ParamSheet>
    <ParamTable>
      <colgroup>
        <col width="19" />
        <col width="154" />
        <col width="60" />
        <col />
      </colgroup>
      <thead>
        <tr>
          <th>Lp</th>
          <th>Nazwa Parametru Obróbki</th>
          <th>Cena</th>
          <th />
        </tr>
      </thead>
      <tbody>
        <tr>
          <td>3</td>
          <td>Szlif poler</td>
          <td>0,00</td>
          <td />
        </tr>
      </tbody>
    </ParamTable>
  </ParamSheet>
)

const Summary = () => (
  <>
    <OrderRow>
      <Chip as="label" htmlFor="pkwiu" $w={52} $bg={LIGHT} $regular $text="left">
        PKWiU
      </Chip>
      <Field id="pkwiu" $w={125} $ml={10} $grey />
      <Field aria-label="PKWiU 2" $w={77} $ml={3} $grey />
      <Chip $w={102} $ml={53} $bg={GREEN}>
        Pozycja zlecenia
      </Chip>
      <Chip $w={11} $ml={5}>
        Z
      </Chip>
      <Chip $w={51} $ml={16}>
        15382
      </Chip>
      <Chip $w={35} $ml={12}>
        1
      </Chip>
      <Chip $w={96} $ml={2} $bg={GREEN} $regular $text="left">
        697X965
      </Chip>
      <Chip $w={198} $ml={16}>
        2
      </Chip>
    </OrderRow>
    <Totals>
      <Marked>
        <StatusField aria-label="Status" $w={149} defaultValue="ZATWIERDZONA" />
      </Marked>
      <BigLabel htmlFor="netto" $w={120} $ml={2}>
        Wartości Netto
      </BigLabel>
      <BigField id="netto" $w={170} $text="right" defaultValue="218.98" />
      <BigLabel htmlFor="vat" $w={51} $ml={121}>
        VAT
      </BigLabel>
      <BigField id="vat" $w={141} $text="right" defaultValue="50.37" />
      <BigLabel htmlFor="brutto" $w={65} $ml={67}>
        Brutto
      </BigLabel>
      <BigField id="brutto" $w={159} $text="right" defaultValue="269.35" />
    </Totals>
    <ActionRow>
      <Actions>
        {ACTIONS.map(({ text, ml, disabled }) => (
          <ActionButton key={text} $ml={ml} disabled={disabled}>
            {text}
          </ActionButton>
        ))}
      </Actions>
      <NumberLabel htmlFor="komp" $w={54}>
        Nr komput
      </NumberLabel>
      <Field id="komp" $w={80} $grey $text="right" defaultValue="3576899" />
    </ActionRow>
    <Ksef>
      <KsefLabel htmlFor="ksef">ID_KSEF</KsefLabel>
      <KsefValue id="ksef">
        9
        <Mosaic cols={13} />
        -20251223-
        <Mosaic cols={17} />
        -C9
      </KsefValue>
    </Ksef>
  </>
)

const Status = () => (
  <StatusBar>
    <StatusCell $w={98}>Modify</StatusCell>
    <StatusCell $w={61} />
    <StatusCell $w={53} />
    <StatusCell $w={48} />
    <svg width="12" height="18" aria-hidden="true">
      <path d="M9 7h2v2H9zM9 11h2v2H9zM5 11h2v2H5zM9 15h2v2H9zM5 15h2v2H5zM1 15h2v2H1z" fill="#a0a0a0" />
    </svg>
  </StatusBar>
)

const App = () => (
  <Frame>
    <GlobalStyle />
    <Caption />
    <MenuBar>
      {MENU.map(name => (
        <MenuLink key={name} href="#">
          {name}
        </MenuLink>
      ))}
    </MenuBar>
    <Tools />
    <Client>
      <ChildWindow>
        <ChildTitle>
          <svg width="16" height="16" aria-hidden="true">
            <path d="M1 2l4-1v14l-4-1z" fill="#1fae74" />
            <path d="M4 1l6 2v10l-6 2z" fill="#35d68c" />
            <path d="M9 3l6 5-6 5z" fill="#22b97a" />
          </svg>
          <ChildCaption>Dokumenty Sprzedaży   Dokument  Sprzedaży</ChildCaption>
          <CloseButton aria-label="Zamknij dokument">
            <svg width="12" height="9" aria-hidden="true">
              <path d="M2 1l8 7M10 1L2 8" stroke="#4d4f5c" strokeWidth="4" />
              <path d="M2 1l8 7M10 1L2 8" stroke="#f4f4f4" strokeWidth="2" />
            </svg>
          </CloseButton>
        </ChildTitle>
        <Content>
          <DocumentHeader />
          <TabSet>
            <TabList role="tablist">
              {TABS.map((name, i) => (
                <Tab key={name} role="tab" $active={i === 0} aria-selected={i === 0}>
                  {name}
                </Tab>
              ))}
            </TabList>
            <TabPanel role="tabpanel">
              <Recipient />
              <Rule />
              <Terms />
            </TabPanel>
          </TabSet>
          <Tables>
            <Items />
            <Params />
          </Tables>
          <Summary />
        </Content>
      </ChildWindow>
    </Client>
    <Status />
  </Frame>
)

export default App
